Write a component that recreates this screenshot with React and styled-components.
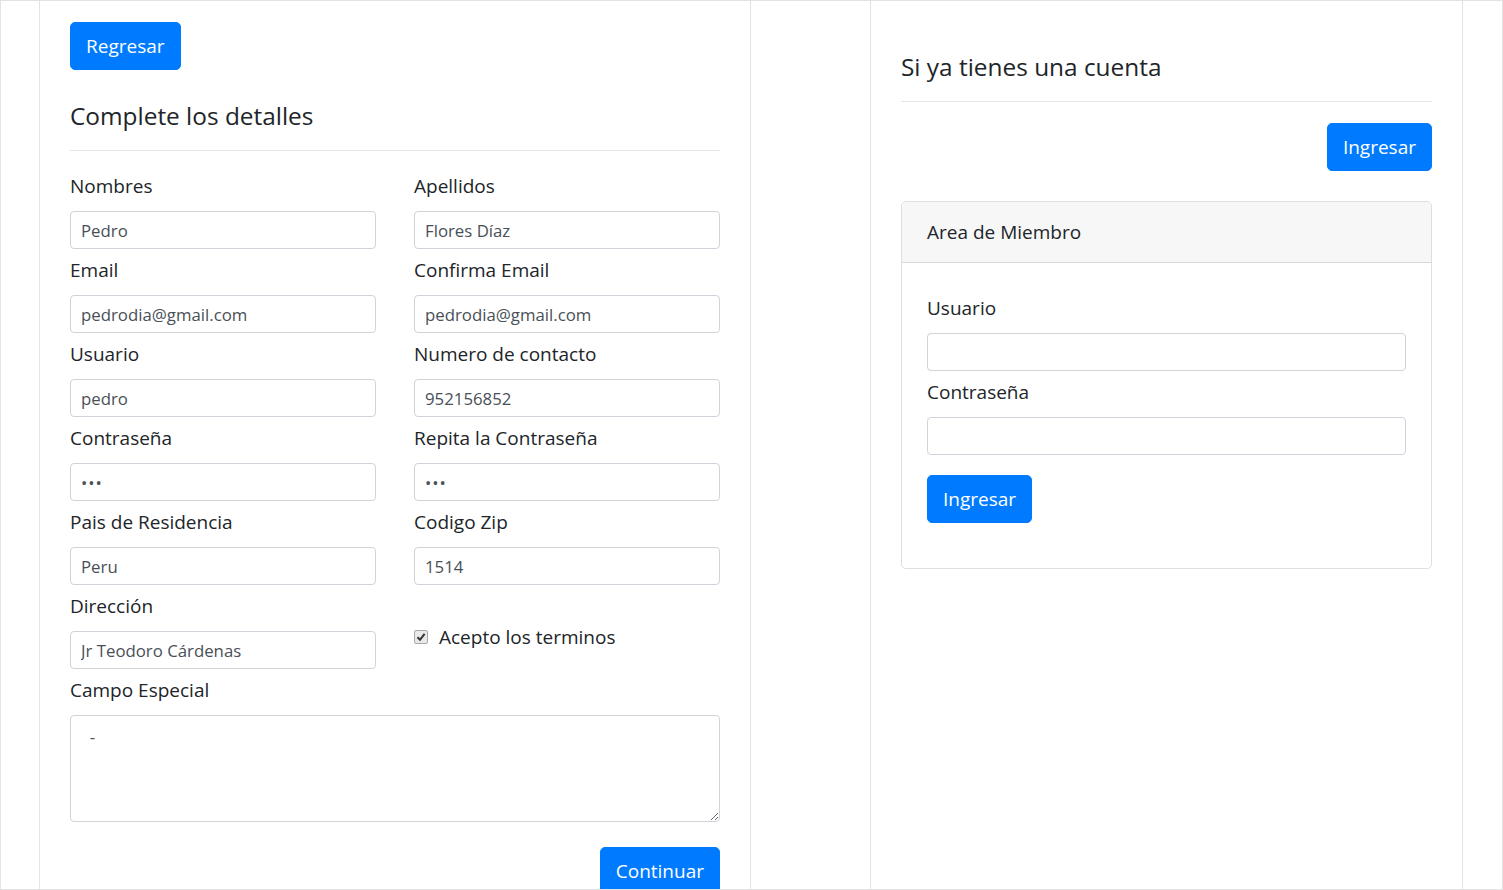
import React from "react";
import styled, { createGlobalStyle } from "styled-components";

const GlobalStyle = createGlobalStyle`
  html, body {
    margin: 0;
    padding: 0;
    background: #fff;
  }
  body {
    font-family: "Open Sans", "Noto Sans", "Liberation Sans", sans-serif;
    color: #212529;
  }
  * {
    box-sizing: border-box;
  }
`;

const fields = [
  { label: "Nombres", value: "Pedro" },
  { label: "Apellidos", value: "Flores Díaz" },
  { label: "Email", value: "pedrodia@gmail.com" },
  { label: "Confirma Email", value: "pedrodia@gmail.com" },
  { label: "Usuario", value: "pedro" },
  { label: "Numero de contacto", value: "952156852" },
  { label: "Contraseña", value: "123", type: "password" },
  { label: "Repita la Contraseña", value: "123", type: "password" },
  { label: "Pais de Residencia", value: "Peru" },
  { label: "Codigo Zip", value: "1514" },
  { label: "Dirección", value: "Jr Teodoro Cárdenas" },
];

const App = () => {
  return (
    <>
      <GlobalStyle />
      <Frame>
        <Row>
          <LeftPanel>
            <Button>Regresar</Button>
            <Title $top={31}>Complete los detalles</Title>
            <Divider />
            <FieldGrid>
              {fields.map((f) => (
                <Field key={f.label}>
                  <Label>{f.label}</Label>
                  <Input
                    type={f.type || "text"}
                    defaultValue={f.value}
                    $password={f.type === "password"}
                  />
                </Field>
              ))}
              <CheckRow>
                <CheckBox>
                  <svg width="10" height="10" viewBox="0 0 10 10">
                    <path
                      d="M1.5 5.2 L4 7.8 L8.6 1.8"
                      fill="none"
                      stroke="#333"
                      strokeWidth="2"
                    />
                  </svg>
                </CheckBox>
                <CheckText>Acepto los terminos</CheckText>
              </CheckRow>
              <Field $wide>
                <Label>Campo Especial</Label>
                <TextArea defaultValue="  -" />
              </Field>
            </FieldGrid>
            <Actions>
              <Button>Continuar</Button>
            </Actions>
          </LeftPanel>

          <RightPanel>
            <Title $top={51}>Si ya tienes una cuenta</Title>
            <Divider $bottom={21} />
            <Actions $top={0}>
              <Button>Ingresar</Button>
            </Actions>
            <Card>
              <CardHeader>Area de Miembro</CardHeader>
              <CardBody>
                <Field>
                  <Label>Usuario</Label>
                  <Input type="text" />
                </Field>
                <Field>
                  <Label>Contraseña</Label>
                  <Input type="password" />
                </Field>
                <Button $top={14}>Ingresar</Button>
              </CardBody>
            </Card>
          </RightPanel>
        </Row>
      </Frame>
    </>
  );
};

export default App;

const Frame = styled.div`
  height: 890px;
  border: 1px solid #e3e3e3;
  overflow: hidden;
  padding: 0 39px 0 38px;
`;

const Row = styled.div`
  display: grid;
  grid-template-columns: 712px 1fr 593px;
  min-height: 100%;
`;

const Panel = styled.div`
  border-left: 1px solid #e2e3e8;
  border-right: 1px solid #e2e3e8;
  padding: 0 30px;
  display: flex;
  flex-direction: column;
`;

const LeftPanel = styled(Panel)`
  grid-column: 1;
  padding-top: 21px;
  align-items: flex-start;
`;

const RightPanel = styled(Panel)`
  grid-column: 3;
`;

const Button = styled.button`
  font-family: inherit;
  font-size: 19px;
  line-height: 30px;
  padding: 8px 15px;
  margin-top: ${({ $top }) => ($top ? `${$top}px` : "0")};
  align-self: flex-start;
  color: #fff;
  background: #007bff;
  border: 1px solid #007bff;
  border-radius: 5px;
  cursor: pointer;
`;

const Title = styled.h5`
  margin: ${({ $top }) => $top}px 0 0;
  font-size: 24.4px;
  line-height: 30px;
  font-weight: 500;
  color: #212529;
`;

const Divider = styled.hr`
  align-self: stretch;
  margin: 19px 0 ${({ $bottom }) => $bottom || 20}px;
  border: 0;
  border-top: 1px solid rgba(0, 0, 0, 0.1);
`;

const FieldGrid = styled.div`
  align-self: stretch;
  display: grid;
  grid-template-columns: 1fr 1fr;
  column-gap: 38px;
  row-gap: 6px;
`;

const Field = styled.div`
  display: flex;
  flex-direction: column;
  grid-column: ${({ $wide }) => ($wide ? "1 / -1" : "auto")};
  margin-bottom: 6px;

  ${FieldGrid} & {
    margin-bottom: 0;
  }
`;

const Label = styled.label`
  font-size: 19px;
  line-height: 30px;
  margin-bottom: 10px;
  color: #212529;
`;

const Input = styled.input`
  height: 38px;
  width: 100%;
  padding: 5px 10px;
  font-family: inherit;
  font-size: 16.8px;
  letter-spacing: ${({ $password }) => ($password ? "1px" : "0")};
  color: #495057;
  background: #fff;
  border: 1px solid #ced4da;
  border-radius: 4px;
  outline: none;
`;

const TextArea = styled.textarea`
  height: 107px;
  width: 100%;
  padding: 8px 10px;
  font-family: inherit;
  font-size: 16.8px;
  line-height: 26px;
  color: #495057;
  border: 1px solid #ced4da;
  border-radius: 4px;
  outline: none;
  resize: vertical;
`;

const CheckRow = styled.label`
  display: flex;
  align-items: center;
  gap: 11px;
  padding-top: 31px;
  height: 61px;
`;

const CheckBox = styled.span`
  width: 14px;
  height: 14px;
  display: flex;
  align-items: center;
  justify-content: center;
  background: #e9e9e9;
  border: 1px solid #a9a9a9;
  border-radius: 2px;
`;

const CheckText = styled.span`
  font-size: 19px;
  line-height: 30px;
  color: #212529;
`;

const Actions = styled.div`
  align-self: stretch;
  display: flex;
  justify-content: flex-end;
  margin-top: ${({ $top }) => ($top === undefined ? 25 : $top)}px;
`;

const Card = styled.div`
  margin-top: 30px;
  border: 1px solid rgba(0, 0, 0, 0.125);
  border-radius: 5px;
  overflow: hidden;
`;

const CardHeader = styled.div`
  padding: 15px 25px;
  font-size: 19px;
  line-height: 30px;
  background: #f7f7f7;
  border-bottom: 1px solid rgba(0, 0, 0, 0.125);
`;

const CardBody = styled.div`
  padding: 30px 25px 45px;
  display: flex;
  flex-direction: column;
`;
